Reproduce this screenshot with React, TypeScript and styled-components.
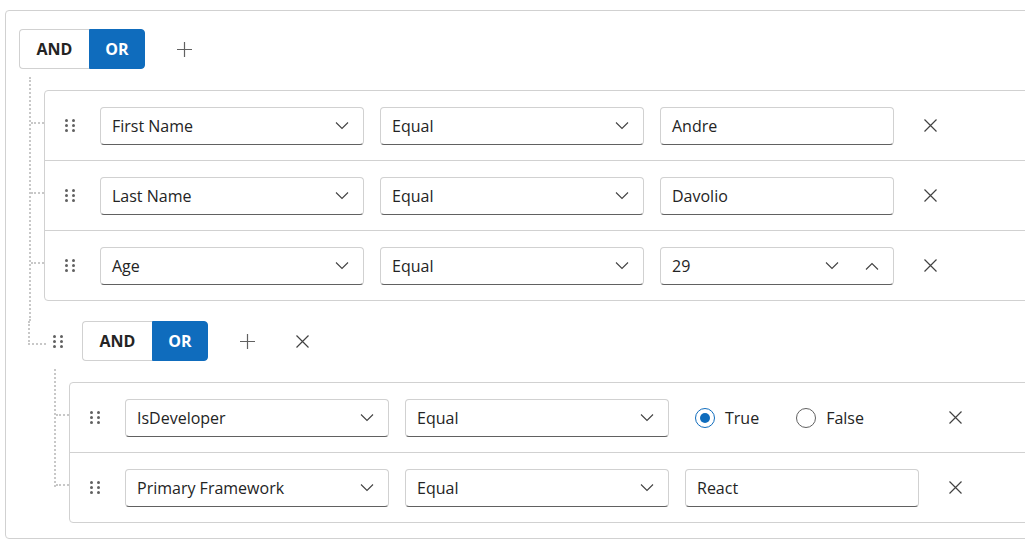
import React from 'react';
import styled, { createGlobalStyle } from 'styled-components';

const GlobalStyle = createGlobalStyle`
  html, body { margin: 0; padding: 0; background: #ffffff; overflow: hidden; }
  body { font-family: 'Open Sans', 'Noto Sans', sans-serif; color: #242424; }
  * { box-sizing: border-box; }
`;

const FONT = `'Open Sans', 'Noto Sans', sans-serif`;
const LINE = '#c8c8c8';

const Page = styled.div`
  padding: 10px 0 0 5px;
  width: 1100px;
`;

const Builder = styled.div`
  width: 1060px;
  border: 1px solid #d1d1d1;
  border-radius: 4px;
  padding: 18px 0 15px 13px;
  background: #ffffff;
`;

const GroupHeader = styled.div`
  display: flex;
  align-items: center;
  height: 40px;
`;

const Toggle = styled.div`
  display: flex;
  height: 40px;
`;

const ToggleButton = styled.button<{ $active?: boolean; $w: number }>`
  width: ${(p) => p.$w}px;
  height: 40px;
  padding: 0;
  font-family: ${FONT};
  font-weight: 700;
  font-size: 16px;
  border: 1px solid ${(p) => (p.$active ? '#0f6cbd' : '#d1d1d1')};
  background: ${(p) => (p.$active ? '#0f6cbd' : '#ffffff')};
  color: ${(p) => (p.$active ? '#ffffff' : '#242424')};
  &:first-child {
    border-radius: 4px 0 0 4px;
    border-right: none;
  }
  &:last-child {
    border-radius: 0 4px 4px 0;
  }
`;

const IconButton = styled.button<{ $ml?: number }>`
  width: 32px;
  height: 32px;
  margin-left: ${(p) => p.$ml ?? 0}px;
  padding: 0;
  border: none;
  background: transparent;
  display: flex;
  align-items: center;
  justify-content: center;
  flex: none;
`;

const GroupBody = styled.div`
  margin-top: 8px;
  padding: 13px 0 0 25px;
`;

const RulesBox = styled.div<{ $last?: boolean }>`
  position: relative;
  border: 1px solid #d1d1d1;
  border-radius: 4px;
  background: #ffffff;
  &::before {
    content: '';
    position: absolute;
    left: -16px;
    top: -14px;
    bottom: ${(p) => (p.$last ? '35px' : '-21px')};
    border-left: 2px dotted ${LINE};
  }
`;

const NestedGroup = styled.div`
  position: relative;
  margin-top: 20px;
  &::before {
    content: '';
    position: absolute;
    left: -16px;
    top: 0;
    width: 16px;
    height: 22px;
    border-left: 2px dotted ${LINE};
    border-bottom: 2px dotted ${LINE};
  }
`;

const NestedHeader = styled(GroupHeader)`
  padding-left: 9px;
`;

const Row = styled.div`
  position: relative;
  display: flex;
  align-items: center;
  height: 70px;
  padding-left: 20px;
  border-bottom: 1px solid #d1d1d1;
  &:last-child {
    height: 69px;
    border-bottom: none;
  }
  &::before {
    content: '';
    position: absolute;
    left: -14px;
    top: 31px;
    width: 13px;
    border-top: 2px dotted ${LINE};
  }
`;

const HandleWrap = styled.span<{ $mr: number }>`
  display: flex;
  width: 10px;
  height: 13px;
  margin-right: ${(p) => p.$mr}px;
  flex: none;
`;

const Control = styled.div<{ $w: number; $ml?: number }>`
  width: ${(p) => p.$w}px;
  height: 38px;
  margin-left: ${(p) => p.$ml ?? 0}px;
  display: flex;
  align-items: center;
  justify-content: space-between;
  padding: 0 14px 0 11px;
  border: 1px solid #d1d1d1;
  border-bottom-color: #616161;
  border-radius: 4px;
  background: #ffffff;
  font-family: ${FONT};
  font-size: 16px;
  color: #242424;
  flex: none;
`;

const Spinners = styled.div`
  display: flex;
  align-items: center;
  gap: 26px;
`;

const RadioGroup = styled.div`
  width: 234px;
  margin-left: 16px;
  display: flex;
  align-items: center;
  padding-left: 10px;
  gap: 37px;
  flex: none;
`;

const RadioItem = styled.label`
  display: flex;
  align-items: center;
  gap: 10px;
  font-family: ${FONT};
  font-size: 16px;
  color: #242424;
`;

const RadioCircle = styled.span<{ $checked?: boolean }>`
  width: 20px;
  height: 20px;
  border-radius: 50%;
  border: ${(p) => (p.$checked ? '1.5px solid #0f6cbd' : '1px solid #616161')};
  background: #ffffff;
  display: flex;
  align-items: center;
  justify-content: center;
  &::after {
    content: '';
    width: 10px;
    height: 10px;
    border-radius: 50%;
    background: ${(p) => (p.$checked ? '#0f6cbd' : 'transparent')};
  }
`;

const Chevron = ({ up }: { up?: boolean }) => (
  <svg width="14" height="8" viewBox="0 0 14 8">
    <path d={up ? 'M1 7.5 L7 1.5 L13 7.5' : 'M1 0.5 L7 6.5 L13 0.5'} stroke="#424242" strokeWidth="1.1" fill="none" />
  </svg>
);

const CloseIcon = () => (
  <svg width="13" height="13" viewBox="0 0 13 13">
    <path d="M0.5 0.5 L12.5 12.5 M12.5 0.5 L0.5 12.5" stroke="#424242" strokeWidth="1.2" fill="none" />
  </svg>
);

const PlusIcon = () => (
  <svg width="15" height="15" viewBox="0 0 15 15">
    <path d="M7.5 0 V15 M0 7.5 H15" stroke="#616161" strokeWidth="1.2" fill="none" />
  </svg>
);

const Handle = ({ mr }: { mr: number }) => (
  <HandleWrap $mr={mr}>
    <svg width="10" height="13" viewBox="0 0 10 13">
      {[1.5, 6.5, 11.5].map((y) =>
        [1.5, 8.5].map((x) => <circle key={`${x}-${y}`} cx={x} cy={y} r="1.5" fill="#616161" />)
      )}
    </svg>
  </HandleWrap>
);

type Value =
  | { kind: 'text'; v: string }
  | { kind: 'number'; v: string }
  | { kind: 'bool'; v: boolean };

type Rule = { field: string; op: string; value: Value };

const topRules: Rule[] = [
  { field: 'First Name', op: 'Equal', value: { kind: 'text', v: 'Andre' } },
  { field: 'Last Name', op: 'Equal', value: { kind: 'text', v: 'Davolio' } },
  { field: 'Age', op: 'Equal', value: { kind: 'number', v: '29' } },
];

const nestedRules: Rule[] = [
  { field: 'IsDeveloper', op: 'Equal', value: { kind: 'bool', v: true } },
  { field: 'Primary Framework', op: 'Equal', value: { kind: 'text', v: 'React' } },
];

const ValueEditor = ({ value }: { value: Value }) => {
  if (value.kind === 'bool') {
    return (
      <RadioGroup>
        <RadioItem>
          <RadioCircle $checked={value.v} />
          True
        </RadioItem>
        <RadioItem>
          <RadioCircle $checked={!value.v} />
          False
        </RadioItem>
      </RadioGroup>
    );
  }
  if (value.kind === 'number') {
    return (
      <Control $w={234} $ml={16}>
        <span>{value.v}</span>
        <Spinners>
          <Chevron />
          <Chevron up />
        </Spinners>
      </Control>
    );
  }
  return (
    <Control $w={234} $ml={16}>
      <span>{value.v}</span>
    </Control>
  );
};

const RuleRow = ({ rule }: { rule: Rule }) => (
  <Row>
    <Handle mr={25} />
    <Control $w={264}>
      <span>{rule.field}</span>
      <Chevron />
    </Control>
    <Control $w={264} $ml={16}>
      <span>{rule.op}</span>
      <Chevron />
    </Control>
    <ValueEditor value={rule.value} />
    <IconButton $ml={20}>
      <CloseIcon />
    </IconButton>
  </Row>
);

const AndOr = () => (
  <Toggle>
    <ToggleButton $w={70}>AND</ToggleButton>
    <ToggleButton $w={56} $active>
      OR
    </ToggleButton>
  </Toggle>
);

export default function App() {
  return (
    <>
      <GlobalStyle />
      <Page>
        <Builder>
          <GroupHeader>
            <AndOr />
            <IconButton $ml={23}>
              <PlusIcon />
            </IconButton>
          </GroupHeader>
          <GroupBody>
            <RulesBox>
              {topRules.map((r) => (
                <RuleRow key={r.field} rule={r} />
              ))}
            </RulesBox>
            <NestedGroup>
              <NestedHeader>
                <Handle mr={19} />
                <AndOr />
                <IconButton $ml={23}>
                  <PlusIcon />
                </IconButton>
                <IconButton $ml={23}>
                  <CloseIcon />
                </IconButton>
              </NestedHeader>
              <GroupBody>
                <RulesBox $last>
                  {nestedRules.map((r) => (
                    <RuleRow key={r.field} rule={r} />
                  ))}
                </RulesBox>
              </GroupBody>
            </NestedGroup>
          </GroupBody>
        </Builder>
      </Page>
    </>
  );
}
